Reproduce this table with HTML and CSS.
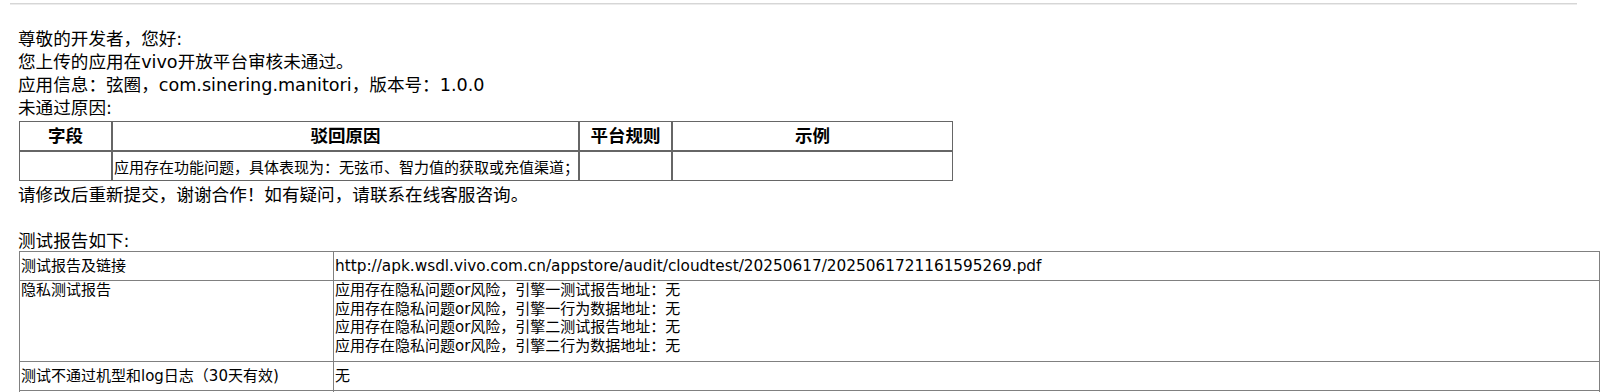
FILE: index.html
```html
<!DOCTYPE html>
<html lang="zh-CN">
<head>
<meta charset="utf-8">
<title>vivo开放平台审核结果</title>
<link rel="stylesheet" href="styles.css">
</head>
<body>
<div class="rule"></div>
<div class="mail">
  <div class="line">尊敬的开发者，您好:</div>
  <div class="line">您上传的应用在vivo开放平台审核未通过。</div>
  <div class="line">应用信息：弦圈，com.sinering.manitori，版本号：1.0.0</div>
  <div class="line">未通过原因:</div>
  <table class="reasons">
    <tr class="head">
      <th class="c1">字段</th>
      <th class="c2">驳回原因</th>
      <th class="c3">平台规则</th>
      <th class="c4">示例</th>
    </tr>
    <tr class="body">
      <td></td>
      <td>应用存在功能问题，具体表现为：无弦币、智力值的获取或充值渠道；</td>
      <td></td>
      <td></td>
    </tr>
  </table>
  <div class="line after">请修改后重新提交，谢谢合作！如有疑问，请联系在线客服咨询。</div>
  <div class="line blank"></div>
  <div class="line title">测试报告如下:</div>
  <table class="report">
    <tr class="r-single">
      <td class="k">测试报告及链接</td>
      <td class="v url">http://apk.wsdl.vivo.com.cn/appstore/audit/cloudtest/20250617/2025061721161595269.pdf</td>
    </tr>
    <tr class="r-multi">
      <td class="k">隐私测试报告</td>
      <td class="v">应用存在隐私问题or风险，引擎一测试报告地址：无<br>应用存在隐私问题or风险，引擎一行为数据地址：无<br>应用存在隐私问题or风险，引擎二测试报告地址：无<br>应用存在隐私问题or风险，引擎二行为数据地址：无</td>
    </tr>
    <tr class="r-single">
      <td class="k">测试不通过机型和log日志（30天有效)</td>
      <td class="v">无</td>
    </tr>
    <tr class="r-single">
      <td class="k"></td>
      <td class="v"></td>
    </tr>
  </table>
</div>
</body>
</html>
```
FILE: styles.css
```css
html, body {
  margin: 0;
  padding: 0;
  background: #ffffff;
}

body {
  color: #000000;
  font-family: "DejaVu Sans", "Noto Sans CJK SC", sans-serif;
}

.rule {
  margin: 3px 0 0 10px;
  width: 1567px;
  height: 1px;
  background: #d6d6d6;
  box-shadow: 0 1px 0 #ececec;
}

.mail {
  padding: 24px 0 0 18px;
  font-size: 17.6px;
  line-height: 23px;
}

.line {
  height: 23px;
  white-space: nowrap;
}

/* 未通过原因 table */
.reasons {
  margin: 1px 0 3px 1px;
  border-collapse: separate;
  border-spacing: 0;
  table-layout: fixed;
  width: 934px;
}

.reasons th,
.reasons td {
  box-sizing: border-box;
  border: 1px solid #666666;
  padding: 1px;
  height: 30px;
}

.reasons th {
  font-size: 17.5px;
  font-weight: bold;
  text-align: center;
  vertical-align: middle;
  line-height: 23px;
}

.reasons .c1 { width: 93px; }
.reasons .c2 { width: 467px; }
.reasons .c3 { width: 93px; }
.reasons .c4 { width: 281px; }

.reasons .body td {
  font-size: 15px;
  line-height: 20px;
  vertical-align: bottom;
  padding: 1px 1px 2px 1px;
  white-space: nowrap;
}

.title {
  height: 21px;
}

/* 测试报告 table */
.report {
  margin-left: 1px;
  border-collapse: collapse;
  table-layout: fixed;
  width: 1574px;
  font-size: 15px;
  line-height: 18.5px;
}

.report td {
  border: 1px solid #808080;
  padding: 0 1px;
  white-space: nowrap;
}

.report .k { width: 311px; }
.report .v { width: 1263px; }

.report .url {
  font-size: 15.3px;
}

.report .r-single td {
  height: 28px;
  vertical-align: middle;
}

.report .r-multi td {
  vertical-align: top;
  padding-bottom: 6px;
}
```
